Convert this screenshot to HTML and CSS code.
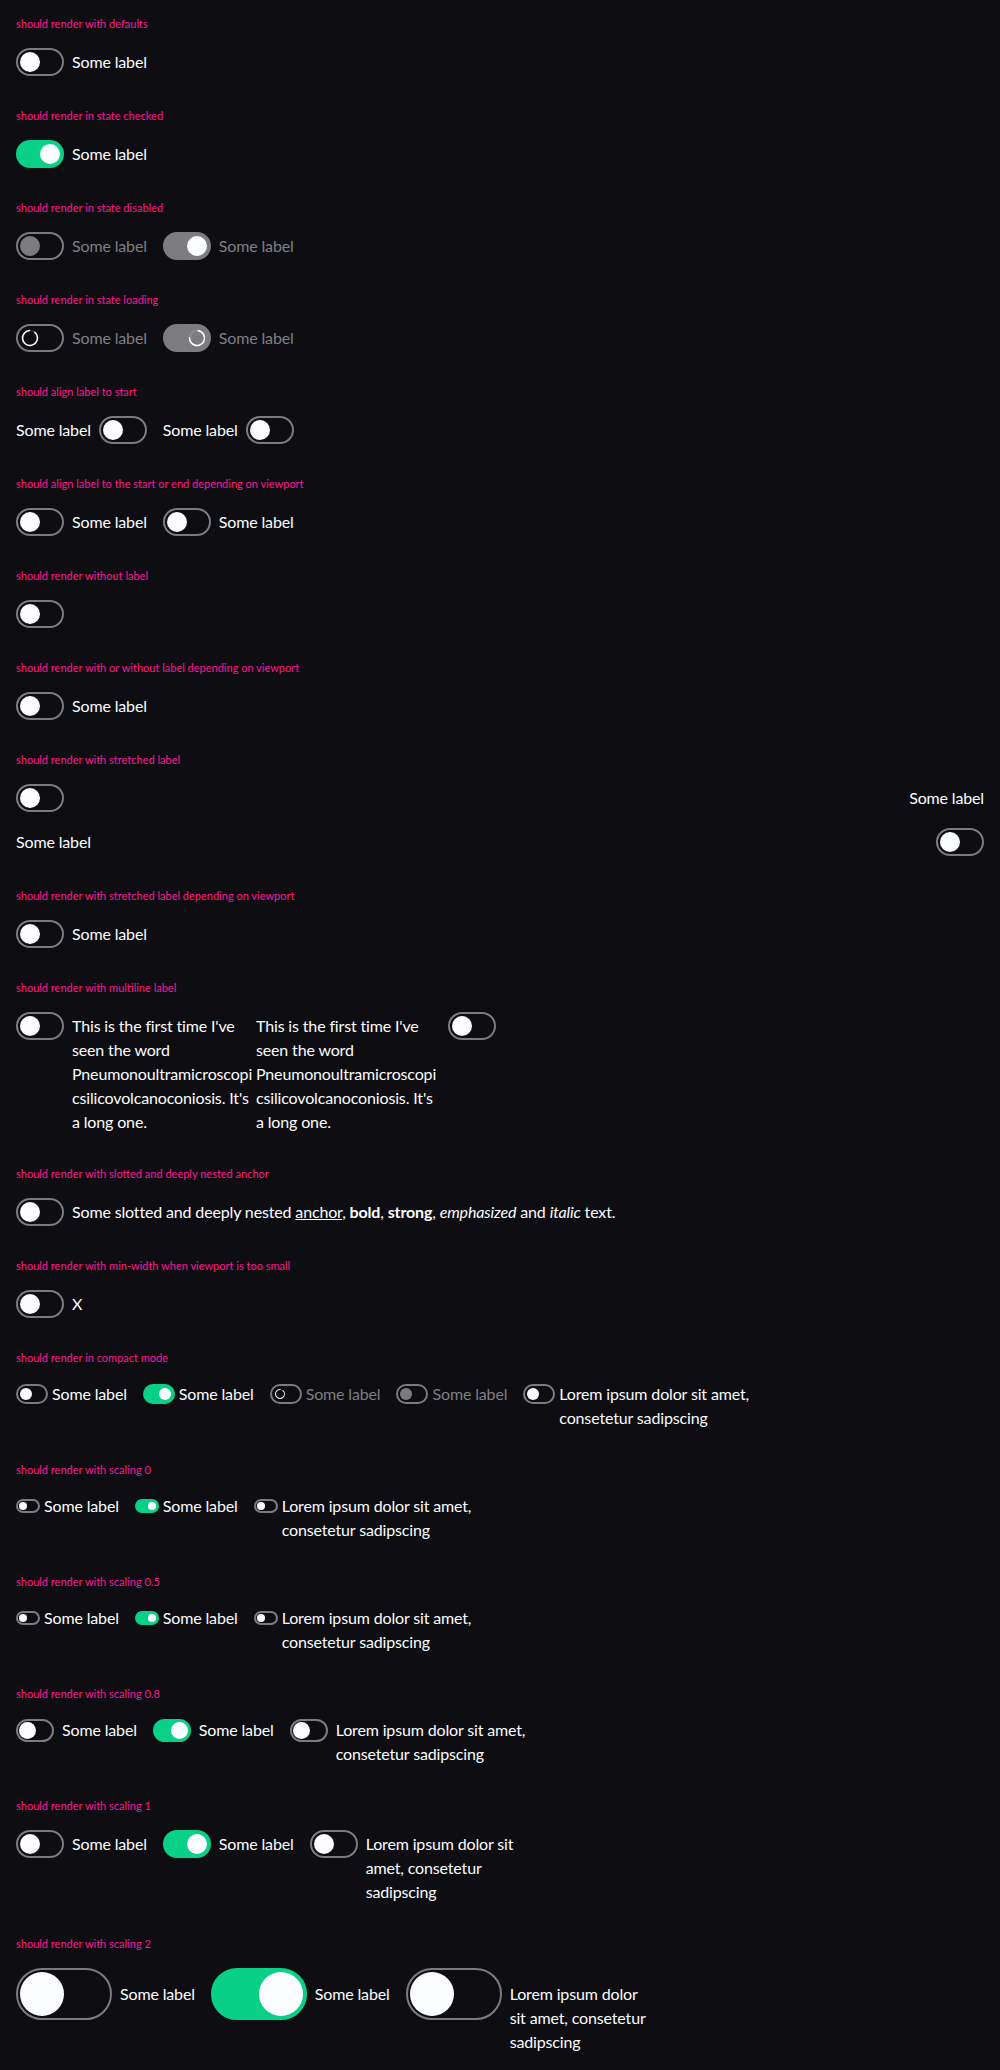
FILE: index.html
```html
<!DOCTYPE html>
<html lang="en">
<head>
<meta charset="utf-8">
<title>Switch</title>
<link rel="stylesheet" href="styles.css">
</head>
<body>
<main class="page">

  <section class="story">
    <p class="title">should render with defaults</p>
    <div class="row">
      <label class="switch"><span class="toggle"><span class="knob"></span></span><span class="label">Some label</span></label>
    </div>
  </section>

  <section class="story">
    <p class="title">should render in state checked</p>
    <div class="row">
      <label class="switch is-checked"><span class="toggle"><span class="knob"></span></span><span class="label">Some label</span></label>
    </div>
  </section>

  <section class="story">
    <p class="title">should render in state disabled</p>
    <div class="row">
      <label class="switch is-disabled"><span class="toggle"><span class="knob"></span></span><span class="label">Some label</span></label>
      <label class="switch is-disabled is-checked"><span class="toggle"><span class="knob"></span></span><span class="label">Some label</span></label>
    </div>
  </section>

  <section class="story">
    <p class="title">should render in state loading</p>
    <div class="row">
      <label class="switch is-loading"><span class="toggle"><span class="knob"><svg class="spinner spinner-off" viewBox="0 0 20 20"><circle class="spin-bg" cx="10" cy="10" r="7.5"/><circle class="spin-fg" cx="10" cy="10" r="7.5"/></svg></span></span><span class="label">Some label</span></label>
      <label class="switch is-loading is-checked"><span class="toggle"><span class="knob"><svg class="spinner spinner-on" viewBox="0 0 20 20"><circle class="spin-bg" cx="10" cy="10" r="7.5"/><circle class="spin-fg" cx="10" cy="10" r="7.5"/></svg></span></span><span class="label">Some label</span></label>
    </div>
  </section>

  <section class="story">
    <p class="title">should align label to start</p>
    <div class="row">
      <label class="switch"><span class="label">Some label</span><span class="toggle"><span class="knob"></span></span></label>
      <label class="switch"><span class="label">Some label</span><span class="toggle"><span class="knob"></span></span></label>
    </div>
  </section>

  <section class="story">
    <p class="title">should align label to the start or end depending on viewport</p>
    <div class="row">
      <label class="switch"><span class="toggle"><span class="knob"></span></span><span class="label">Some label</span></label>
      <label class="switch"><span class="toggle"><span class="knob"></span></span><span class="label">Some label</span></label>
    </div>
  </section>

  <section class="story">
    <p class="title">should render without label</p>
    <div class="row">
      <label class="switch"><span class="toggle"><span class="knob"></span></span></label>
    </div>
  </section>

  <section class="story">
    <p class="title">should render with or without label depending on viewport</p>
    <div class="row">
      <label class="switch"><span class="toggle"><span class="knob"></span></span><span class="label">Some label</span></label>
    </div>
  </section>

  <section class="story">
    <p class="title">should render with stretched label</p>
    <div class="stack">
      <label class="switch stretch"><span class="toggle"><span class="knob"></span></span><span class="label">Some label</span></label>
      <label class="switch stretch"><span class="label">Some label</span><span class="toggle"><span class="knob"></span></span></label>
    </div>
  </section>

  <section class="story">
    <p class="title">should render with stretched label depending on viewport</p>
    <div class="row">
      <label class="switch"><span class="toggle"><span class="knob"></span></span><span class="label">Some label</span></label>
    </div>
  </section>

  <section class="story">
    <p class="title">should render with multiline label</p>
    <div class="row tight">
      <label class="switch fixed"><span class="toggle"><span class="knob"></span></span><span class="label">This is the first time I've seen the word Pneumonoultramicroscopicsilicovolcanoconiosis. It's a long one.</span></label>
      <label class="switch fixed"><span class="label">This is the first time I've seen the word Pneumonoultramicroscopicsilicovolcanoconiosis. It's a long one.</span><span class="toggle"><span class="knob"></span></span></label>
    </div>
  </section>

  <section class="story">
    <p class="title">should render with slotted and deeply nested anchor</p>
    <div class="row">
      <label class="switch"><span class="toggle"><span class="knob"></span></span><span class="label">Some slotted and deeply nested <a href="#">anchor</a>, <b>bold</b>, <strong>strong</strong>, <em>emphasized</em> and <i>italic</i> text.</span></label>
    </div>
  </section>

  <section class="story">
    <p class="title">should render with min-width when viewport is too small</p>
    <div class="row">
      <label class="switch"><span class="toggle"><span class="knob"></span></span><span class="label">X</span></label>
    </div>
  </section>

  <section class="story">
    <p class="title">should render in compact mode</p>
    <div class="row compact">
      <label class="switch"><span class="toggle"><span class="knob"></span></span><span class="label">Some label</span></label>
      <label class="switch is-checked"><span class="toggle"><span class="knob"></span></span><span class="label">Some label</span></label>
      <label class="switch is-loading"><span class="toggle"><span class="knob"><svg class="spinner spinner-off" viewBox="0 0 20 20"><circle class="spin-bg" cx="10" cy="10" r="7.5"/><circle class="spin-fg" cx="10" cy="10" r="7.5"/></svg></span></span><span class="label">Some label</span></label>
      <label class="switch is-disabled"><span class="toggle"><span class="knob"></span></span><span class="label">Some label</span></label>
      <label class="switch narrow"><span class="toggle"><span class="knob"></span></span><span class="label">Lorem ipsum dolor sit amet, consetetur sadipscing</span></label>
    </div>
  </section>

  <section class="story">
    <p class="title">should render with scaling 0</p>
    <div class="row scale-0">
      <label class="switch"><span class="toggle"><span class="knob"></span></span><span class="label">Some label</span></label>
      <label class="switch is-checked"><span class="toggle"><span class="knob"></span></span><span class="label">Some label</span></label>
      <label class="switch narrow"><span class="toggle"><span class="knob"></span></span><span class="label">Lorem ipsum dolor sit amet, consetetur sadipscing</span></label>
    </div>
  </section>

  <section class="story">
    <p class="title">should render with scaling 0.5</p>
    <div class="row scale-0">
      <label class="switch"><span class="toggle"><span class="knob"></span></span><span class="label">Some label</span></label>
      <label class="switch is-checked"><span class="toggle"><span class="knob"></span></span><span class="label">Some label</span></label>
      <label class="switch narrow"><span class="toggle"><span class="knob"></span></span><span class="label">Lorem ipsum dolor sit amet, consetetur sadipscing</span></label>
    </div>
  </section>

  <section class="story">
    <p class="title">should render with scaling 0.8</p>
    <div class="row scale-08">
      <label class="switch"><span class="toggle"><span class="knob"></span></span><span class="label">Some label</span></label>
      <label class="switch is-checked"><span class="toggle"><span class="knob"></span></span><span class="label">Some label</span></label>
      <label class="switch narrow"><span class="toggle"><span class="knob"></span></span><span class="label">Lorem ipsum dolor sit amet, consetetur sadipscing</span></label>
    </div>
  </section>

  <section class="story">
    <p class="title">should render with scaling 1</p>
    <div class="row">
      <label class="switch"><span class="toggle"><span class="knob"></span></span><span class="label">Some label</span></label>
      <label class="switch is-checked"><span class="toggle"><span class="knob"></span></span><span class="label">Some label</span></label>
      <label class="switch narrow"><span class="toggle"><span class="knob"></span></span><span class="label">Lorem ipsum dolor sit amet, consetetur sadipscing</span></label>
    </div>
  </section>

  <section class="story">
    <p class="title">should render with scaling 2</p>
    <div class="row scale-2">
      <label class="switch"><span class="toggle"><span class="knob"></span></span><span class="label">Some label</span></label>
      <label class="switch is-checked"><span class="toggle"><span class="knob"></span></span><span class="label">Some label</span></label>
      <label class="switch narrow"><span class="toggle"><span class="knob"></span></span><span class="label">Lorem ipsum dolor sit amet, consetetur sadipscing</span></label>
    </div>
  </section>

</main>
</body>
</html>
```

FILE: styles.css
```css
html {
  background: #0e0e12;
}

body {
  margin: 0;
  background: #0e0e12;
  color: #fbfcff;
  font-family: Lato, "Noto Sans", sans-serif;
}

.page {
  padding: 16px;
}

.story {
  margin-bottom: 32px;
}

.story:last-child {
  margin-bottom: 0;
}

.title {
  margin: 0 0 16px;
  font-size: 11px;
  line-height: 16px;
  color: #ff1493;
}

.row {
  display: flex;
  flex-wrap: wrap;
  align-items: flex-start;
  gap: 16px;
}

.row.tight {
  gap: 0;
}

.stack {
  display: flex;
  flex-direction: column;
  gap: 16px;
}

/* switch */
.switch {
  --w: 48px;
  --h: 28px;
  --k: 20px;
  --p: 2px;
  --gap: 8px;
  display: flex;
  align-items: flex-start;
  gap: var(--gap);
  cursor: pointer;
}

.compact .switch {
  --w: 32px;
  --h: 20px;
  --k: 12px;
  --p: 2px;
  --gap: 4px;
}

.scale-0 .switch {
  --w: 24px;
  --h: 14px;
  --k: 8px;
  --p: 1px;
  --gap: 4px;
}

.scale-08 .switch {
  --w: 38px;
  --h: 23px;
  --k: 17px;
  --p: 1px;
  --gap: 8px;
}

.scale-2 .switch {
  --w: 96px;
  --h: 52px;
  --k: 44px;
  --p: 2px;
  --gap: 8px;
}

.switch.narrow {
  max-width: 240px;
}

.switch.fixed {
  width: 240px;
}

.switch.stretch {
  justify-content: space-between;
}

.toggle {
  flex-shrink: 0;
  box-sizing: border-box;
  display: flex;
  align-items: center;
  justify-content: flex-start;
  width: var(--w);
  height: var(--h);
  padding: 0 var(--p);
  margin-top: max(0px, calc((24px - var(--h)) / 2));
  border: 2px solid #7c7c80;
  border-radius: var(--h);
  background: transparent;
}

.knob {
  display: block;
  flex-shrink: 0;
  width: var(--k);
  height: var(--k);
  border-radius: 50%;
  background: #fbfcff;
}

.label {
  flex: 0 1 auto;
  min-width: 0;
  font-size: 16px;
  line-height: 24px;
  letter-spacing: -0.15px;
  overflow-wrap: anywhere;
  margin-top: max(0px, calc((var(--h) - 24px) / 2));
  color: #fbfcff;
}

.switch.fixed .label {
  flex: 1 1 0;
}

.label a {
  color: inherit;
  text-decoration: underline;
}

.label b,
.label strong {
  font-weight: 700;
}

/* states */
.is-checked .toggle {
  justify-content: flex-end;
  background: #09d087;
  border-color: #09d087;
}

.is-disabled .label,
.is-loading .label {
  color: #7e7f83;
}

.is-disabled .toggle {
  border-color: #7c7c80;
}

.is-disabled .knob {
  background: #7c7c80;
}

.is-disabled.is-checked .toggle,
.is-loading.is-checked .toggle {
  background: #7c7c80;
  border-color: #7c7c80;
}

.is-disabled.is-checked .knob {
  background: #fbfcff;
}

.is-loading .knob {
  background: transparent;
}

.spinner {
  display: block;
  width: 100%;
  height: 100%;
}

.spin-bg {
  fill: none;
  stroke: rgba(251, 252, 255, 0.15);
  stroke-width: 1.6;
}

.spin-fg {
  fill: none;
  stroke: #fbfcff;
  stroke-width: 1.6;
  stroke-linecap: round;
}

.spinner-off .spin-fg {
  stroke-dasharray: 41 6.1;
  transform: rotate(-50deg);
  transform-origin: 10px 10px;
}

.spinner-on .spin-fg {
  stroke-dasharray: 34 13.1;
  transform: rotate(-80deg);
  transform-origin: 10px 10px;
}
```
